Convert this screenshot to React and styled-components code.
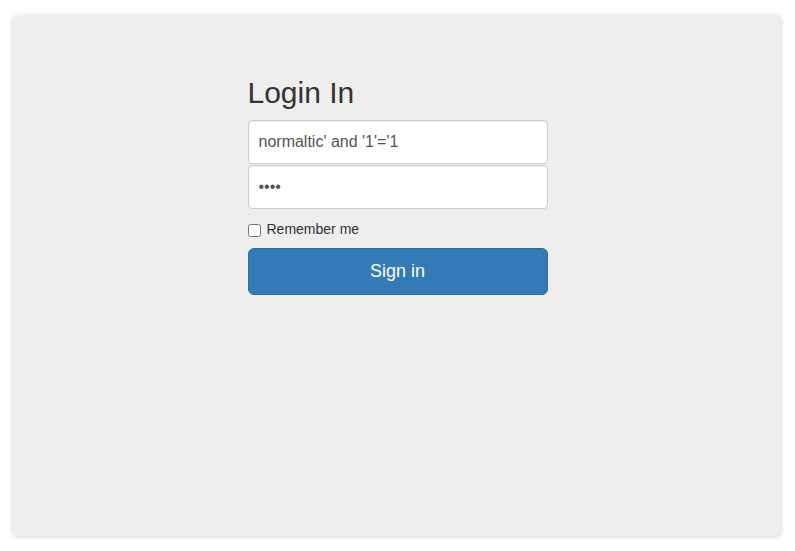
import React from "react";
import styled, { createGlobalStyle } from "styled-components";

const Global = createGlobalStyle`
  html, body { margin: 0; padding: 0; background: #fff; }
  body { font-family: "Liberation Sans", Arial, Helvetica, sans-serif; color: #333; font-size: 14px; line-height: 1.42857; }
  * { box-sizing: border-box; }
`;

const Page = styled.div`
  padding: 15px 14px 15px 13px;
`;

const Card = styled.div`
  height: 521px;
  background: #eeeeee;
  border-radius: 5px;
  box-shadow: 0 1px 5px rgba(0, 0, 0, 0.18);
  display: flex;
  justify-content: center;
  padding-top: 61px;
`;

const Form = styled.form`
  width: 300px;
  margin-left: 1px;
  display: flex;
  flex-direction: column;
`;

const Heading = styled.h2`
  margin: 0 0 11px;
  font-size: 30px;
  font-weight: 500;
  line-height: 1.1;
  color: #333;
`;

const Input = styled.input`
  display: block;
  width: 100%;
  height: 44px;
  padding: 10px;
  font-family: inherit;
  font-size: 16px;
  color: #555;
  background: #fff;
  border: 1px solid #ccc;
  border-radius: 4px;
  box-shadow: inset 0 1px 1px rgba(0, 0, 0, 0.075);
  margin-bottom: ${(p) => (p.$gap ? "1px" : "0")};
  outline: none;
`;

const CheckRow = styled.label`
  display: flex;
  align-items: center;
  height: 20px;
  margin: 11px 0 8px;
  font-size: 14px;
  color: #333;
  font-weight: 400;
`;

const Check = styled.input`
  width: 13px;
  height: 13px;
  margin: 0 6px 0 0;
`;

const Button = styled.button`
  display: block;
  width: 100%;
  height: 47px;
  padding: 10px 16px;
  font-family: inherit;
  font-size: 18px;
  line-height: 1.3333;
  color: #fff;
  background: #337ab7;
  border: 1px solid #2e6da4;
  border-radius: 6px;
  cursor: pointer;
`;

export default function App() {
  return (
    <>
      <Global />
      <Page>
        <Card>
          <Form onSubmit={(e) => e.preventDefault()}>
            <Heading>Login In</Heading>
            <Input $gap type="text" defaultValue="normaltic' and '1'='1" />
            <Input type="password" defaultValue="1234" />
            <CheckRow>
              <Check type="checkbox" />
              Remember me
            </CheckRow>
            <Button type="submit">Sign in</Button>
          </Form>
        </Card>
      </Page>
    </>
  );
}
